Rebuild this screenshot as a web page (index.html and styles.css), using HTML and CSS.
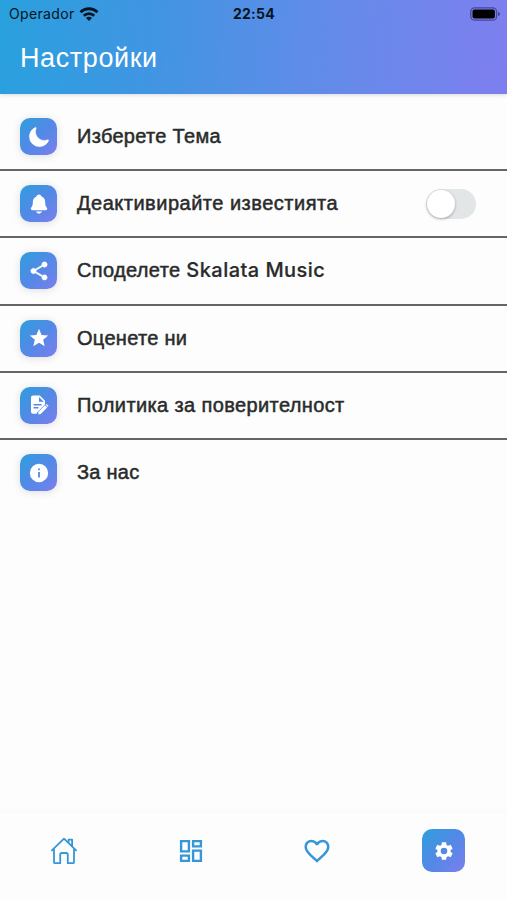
FILE: index.html
```html
<!DOCTYPE html>
<html lang="bg">
<head>
<meta charset="utf-8">
<title>Настройки</title>
<link rel="stylesheet" href="styles.css">
</head>
<body>
<div class="app">
  <header class="header">
    <div class="status">
      <div class="carrier"><span>Operador</span>
        <svg width="20" height="14" viewBox="0 0 20 14" fill="none" stroke="#071522" stroke-width="2.8"><path d="M1.5 5.3a12 12 0 0 1 17 0M4.8 8.7a7.4 7.4 0 0 1 10.4 0"/><path d="M7 11a4.2 4.2 0 0 1 6 0l-3 3z" fill="#071522" stroke="none"/></svg>
      </div>
      <span class="time">22:54</span>
      <svg class="battery" width="31" height="14" viewBox="0 0 31 14"><rect x=".8" y=".8" width="25.8" height="12.4" rx="3.8" fill="none" stroke="#25235a" stroke-opacity=".6" stroke-width="1.3"/><rect x="2.5" y="2.5" width="22.4" height="9" rx="2" fill="#000"/><path d="M28 5q2 .4 2 2t-2 2z" fill="#25235a" fill-opacity=".65"/></svg>
    </div>
    <h1 class="title">Настройки</h1>
  </header>

  <main class="list">
    <div class="row">
      <span class="tile"><svg width="22" height="22" viewBox="0 0 512 512"><path stroke="#fff" stroke-width="10" d="M264 480A232 232 0 0 1 32 248c0-94 54-178.28 137.61-214.67a16 16 0 0 1 21.06 21.06C181.07 76.43 176 104.66 176 136c0 110.28 89.72 200 200 200 31.34 0 59.57-5.07 81.61-14.67a16 16 0 0 1 21.06 21.06C442.28 426 358 480 264 480z"/></svg></span>
      <span class="label l1">Изберете Тема</span>
    </div>
    <div class="row">
      <span class="tile"><svg width="22" height="22" viewBox="0 0 512 512"><path d="M440.08 341.31c-1.66-2-3.29-4-4.89-5.93-22-26.61-35.31-42.67-35.31-118 0-39-9.33-71-27.72-95-13.56-17.73-31.89-31.18-56.05-41.12a3 3 0 0 1-.82-.67C306.6 51.49 282.82 32 256 32s-50.59 19.49-59.28 48.56a3.13 3.13 0 0 1-.81.65c-56.38 23.21-83.78 67.74-83.78 136.14 0 75.36-13.29 91.42-35.31 118-1.6 1.93-3.23 3.89-4.89 5.93a35.16 35.16 0 0 0-4.65 37.62c6.17 13 19.32 21.07 34.33 21.07H410.5c14.94 0 28-8.06 34.19-21a35.17 35.17 0 0 0-4.61-37.66zM256 480a80.06 80.06 0 0 0 70.44-42.13 4 4 0 0 0-3.54-5.87H189.12a4 4 0 0 0-3.55 5.87A80.06 80.06 0 0 0 256 480z"/></svg></span>
      <span class="label l2">Деактивирайте известията</span>
      <span class="switch"><span class="knob"></span></span>
    </div>
    <div class="row">
      <span class="tile"><svg width="22" height="22" viewBox="0 0 24 24"><path stroke="#fff" stroke-width=".4" d="M18 16.08c-.76 0-1.44.3-1.96.77L8.91 12.7c.05-.23.09-.46.09-.7s-.04-.47-.09-.7l7.05-4.11c.54.5 1.25.81 2.04.81 1.66 0 3-1.34 3-3s-1.34-3-3-3-3 1.34-3 3c0 .24.04.47.09.7L8.04 9.81C7.5 9.31 6.79 9 6 9c-1.66 0-3 1.34-3 3s1.34 3 3 3c.79 0 1.5-.31 2.04-.81l7.12 4.16c-.05.21-.08.43-.08.65 0 1.61 1.31 2.92 2.92 2.92s2.92-1.31 2.92-2.92-1.31-2.92-2.92-2.92z"/></svg></span>
      <span class="label l3">Споделете <span class="brand">Skalata Music</span></span>
    </div>
    <div class="row">
      <span class="tile"><svg width="22" height="22" viewBox="0 0 24 24"><path d="M12 17.27 18.18 21l-1.64-7.03L22 9.24l-7.19-.61L12 2 9.19 8.63 2 9.24l5.46 4.73L5.82 21z"/></svg></span>
      <span class="label l4">Оценете ни</span>
    </div>
    <div class="row">
      <span class="tile"><svg width="22" height="22" viewBox="0 0 22 22"><path fill-rule="evenodd" d="M5 1.5h6.8L17 6.7v3.8l-8.2 8.2v1H5A2 2 0 0 1 3 17.700V3.500a2 2 0 0 1 2-2zM11 3v4.700h4.700zM5.500 10v1.400h8V10zM5.500 13v1.400h5V13z"/><path d="m10.300 18 6.700-6.700 2.200 2.200-6.700 6.700h-2.200zM17.600 10.700l.8-.8 2.200 2.200-.8.8z"/></svg></span>
      <span class="label l5">Политика за поверителност</span>
    </div>
    <div class="row">
      <span class="tile"><svg width="22" height="22" viewBox="0 0 24 24"><path fill-rule="evenodd" d="M12 2a10 10 0 1 0 0 20 10 10 0 0 0 0-20zm1 15h-2v-6h2zm0-8h-2V7h2z"/></svg></span>
      <span class="label l6">За нас</span>
    </div>
  </main>

  <nav class="nav">
    <div class="nav-item"><svg width="28" height="28" viewBox="0 0 28 28" fill="none" stroke="#3596d8" stroke-width="1.8" stroke-linejoin="round" stroke-linecap="round"><path d="M1.900 13.400 14 1.700l12.100 11.700M4 12v13.200q0 1 1 1h5.200v-8.500q0-1.700 1.700-1.700h4.200q1.700 0 1.700 1.700v8.500H23q1 0 1-1V12M18.600 5.800V2.600h3.500v6.500"/></svg></div>
    <div class="nav-item"><svg width="24" height="24" viewBox="0 0 24 24" fill="none" stroke="#3596d8" stroke-width="2.400"><path d="M2.100 2.100h7.800v10.300H2.100zM14.100 2.100h7.800v5.300h-7.800zM2.100 16.600h7.800v5.300H2.100zM14.100 11.600h7.800v10.300h-7.800z"/></svg></div>
    <div class="nav-item"><svg width="30" height="30" viewBox="0 0 24 24" fill="#3596d8"><path d="M16.500 3c-1.740 0-3.410.81-4.500 2.090C10.910 3.810 9.240 3 7.500 3 4.420 3 2 5.420 2 8.500c0 3.780 3.400 6.860 8.550 11.540L12 21.350l1.450-1.320C18.600 15.360 22 12.280 22 8.500 22 5.420 19.580 3 16.500 3zm-4.400 15.550-.1.100-.1-.1C7.140 14.240 4 11.390 4 8.500 4 6.500 5.500 5 7.500 5c1.540 0 3.040.99 3.570 2.360h1.870C13.460 5.990 14.960 5 16.500 5c2 0 3.500 1.500 3.500 3.500 0 2.890-3.140 5.740-7.900 10.050z"/></svg></div>
    <div class="nav-item"><span class="tile active"><svg width="22" height="22" viewBox="0 0 24 24"><path d="M19.140 12.940c.04-.3.060-.61.060-.94 0-.32-.02-.64-.07-.94l2.030-1.580c.18-.14.230-.41.120-.61l-1.920-3.320c-.12-.22-.37-.29-.59-.22l-2.390.960c-.5-.38-1.030-.7-1.620-.94l-.36-2.540c-.04-.24-.24-.41-.48-.41h-3.840c-.24 0-.43.170-.47.410l-.36 2.540c-.59.240-1.130.570-1.620.940l-2.390-.960c-.22-.08-.47 0-.59.220L2.740 8.870c-.12.210-.08.470.120.610l2.030 1.580c-.05.300-.09.630-.09.940s.02.640.070.940l-2.030 1.580c-.18.140-.23.410-.12.610l1.920 3.320c.12.220.370.290.590.220l2.390-.96c.5.380 1.030.700 1.620.940l.36 2.540c.05.240.240.410.480.410h3.840c.24 0 .44-.17.470-.41l.36-2.540c.59-.24 1.130-.56 1.620-.94l2.390.960c.22.080.470 0 .590-.22l1.920-3.320c.12-.22.070-.47-.12-.61zM12 15.600A3.600 3.600 0 1 1 12 8.400a3.600 3.600 0 0 1 0 7.200z"/></svg></span></div>
  </nav>
</div>
</body>
</html>
```
FILE: styles.css
```css
* { box-sizing: border-box; }
body { margin: 0; background: #fdfdfd; font-family: "Liberation Sans", Arial, sans-serif; color: #292b2b; }
.app { height: 900px; display: flex; flex-direction: column; overflow: hidden; }
svg { display: block; }
.header { height: 93.500px; flex: none; background: linear-gradient(93deg, #29a0de 0%, #4494e3 34%, #628be9 64%, #7e7fef 100%); box-shadow: 0 1px 4px rgba(0, 0, 0, .15); }
.status { height: 27px; padding: 0 6px 0 9px; display: grid; grid-template-columns: 1fr auto 1fr; align-items: center; color: #071522; font-family: Inter, sans-serif; }
.carrier { display: flex; align-items: center; gap: 4px; font-size: 14px; letter-spacing: .35px; }
.time { margin-right: 2px; font-size: 14px; font-weight: 700; letter-spacing: .3px; }
.battery { justify-self: end; }
.title { margin: 15px 0 0 20px; font-size: 27px; font-weight: 400; line-height: 32px; letter-spacing: .6px; color: #fff; white-space: nowrap; }
.list { flex: 1; padding-top: 10.500px; }
.row { height: 67.200px; padding: 0 31px 0 20px; display: flex; align-items: center; border-bottom: 2px solid #666; }
.row:last-child { border-bottom-color: transparent; }
.tile { width: 37px; height: 37px; flex: none; border-radius: 10px; display: flex; align-items: center; justify-content: center; background: linear-gradient(135deg, #2e9fdd, #5289e6 50%, #7b7eee); box-shadow: 0 1px 8px rgba(0, 0, 0, .13); fill: #fff; }
.label { margin: -1px 0 0 20px; font-size: 20px; line-height: 26px; -webkit-text-stroke: .5px #292b2b; white-space: nowrap; }
.l1 { letter-spacing: .3px; }
.l2 { letter-spacing: .5px; }
.l3 { letter-spacing: .35px; }
.l4 { letter-spacing: .3px; }
.l5 { letter-spacing: .38px; }
.l6 { letter-spacing: .25px; }
.brand { font-family: Inter, sans-serif; font-size: 20px; font-weight: 500; letter-spacing: .45px; -webkit-text-stroke: .2px #292b2b; }
.switch { width: 50px; height: 30px; margin-left: auto; border-radius: 15px; background: #e3e6e6; display: flex; align-items: center; padding-left: 1px; }
.knob { width: 28px; height: 28px; border-radius: 50%; background: #fff; box-shadow: 0 1px 3px rgba(0, 0, 0, .3); }
.nav { height: 87px; flex: none; padding-bottom: 12px; display: grid; grid-template-columns: repeat(4, 1fr); align-items: center; box-shadow: 0 -2px 9px rgba(0, 0, 0, .018); }
.nav-item { display: flex; justify-content: center; padding-left: 1px; }
.nav-item:last-child { padding-left: 0; }
.active { width: 43px; height: 43px; box-shadow: none; }
```
